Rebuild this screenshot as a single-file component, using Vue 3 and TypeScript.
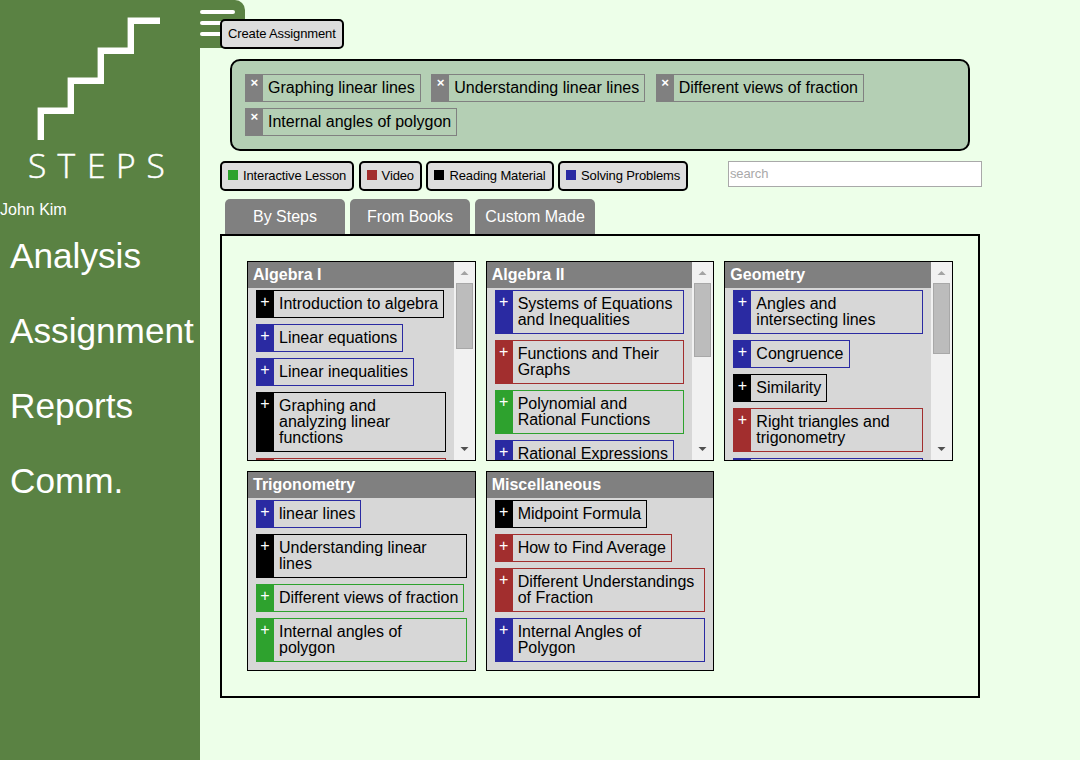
<script setup lang="ts">
type Kind = 'lesson' | 'video' | 'reading' | 'problem'

interface Topic {
  title: string
  kind: Kind
}

interface Subject {
  name: string
  thumb?: number
  next?: Kind
  topics: Topic[]
}

const nav: string[] = ['Analysis', 'Assignment', 'Reports', 'Comm.']

const selected: string[] = [
  'Graphing linear lines',
  'Understanding linear lines',
  'Different views of fraction',
  'Internal angles of polygon',
]

const filters: { label: string; kind: Kind }[] = [
  { label: 'Interactive Lesson', kind: 'lesson' },
  { label: 'Video', kind: 'video' },
  { label: 'Reading Material', kind: 'reading' },
  { label: 'Solving Problems', kind: 'problem' },
]

const tabs: string[] = ['By Steps', 'From Books', 'Custom Made']

const subjects: Subject[] = [
  {
    name: 'Algebra I',
    thumb: 66,
    next: 'video',
    topics: [
      { title: 'Introduction to algebra', kind: 'reading' },
      { title: 'Linear equations', kind: 'problem' },
      { title: 'Linear inequalities', kind: 'problem' },
      { title: 'Graphing and\nanalyzing linear\nfunctions', kind: 'reading' },
    ],
  },
  {
    name: 'Algebra II',
    thumb: 74,
    topics: [
      { title: 'Systems of Equations\nand Inequalities', kind: 'problem' },
      { title: 'Functions and Their\nGraphs', kind: 'video' },
      { title: 'Polynomial and\nRational Functions', kind: 'lesson' },
      { title: 'Rational Expressions', kind: 'problem' },
    ],
  },
  {
    name: 'Geometry',
    thumb: 71,
    next: 'problem',
    topics: [
      { title: 'Angles and\nintersecting lines', kind: 'problem' },
      { title: 'Congruence', kind: 'problem' },
      { title: 'Similarity', kind: 'reading' },
      { title: 'Right triangles and\ntrigonometry', kind: 'video' },
    ],
  },
  {
    name: 'Trigonometry',
    topics: [
      { title: 'linear lines', kind: 'problem' },
      { title: 'Understanding linear\nlines', kind: 'reading' },
      { title: 'Different views of fraction', kind: 'lesson' },
      { title: 'Internal angles of\npolygon', kind: 'lesson' },
    ],
  },
  {
    name: 'Miscellaneous',
    topics: [
      { title: 'Midpoint Formula', kind: 'reading' },
      { title: 'How to Find Average', kind: 'video' },
      { title: 'Different Understandings\nof Fraction', kind: 'video' },
      { title: 'Internal Angles of\nPolygon', kind: 'problem' },
    ],
  },
]
</script>

<template>
  <div class="page">
    <aside class="sidebar">
      <svg class="logo" width="200" height="200" viewBox="0 0 200 200">
        <path
          d="M40.8 140V110.8H70.8V80.8H100.8V50.8H130.8V20.8H160"
          fill="none"
          stroke="#fff"
          stroke-width="6.4"
        />
        <text class="logo-text" x="28 57.500 87 116 146.500" y="177.500">STEPS</text>
      </svg>
      <div class="user">John Kim</div>
      <nav>
        <a v-for="item in nav" :key="item" class="nav-item">{{ item }}</a>
      </nav>
      <div class="menu-toggle"><i></i><i></i><i></i></div>
    </aside>

    <main class="main">
      <button class="btn" type="button">Create Assignment</button>

      <section class="selected">
        <div v-for="title in selected" :key="title" class="chip picked">
          <span class="badge">×</span>
          <span class="label">{{ title }}</span>
        </div>
      </section>

      <div class="toolbar">
        <button v-for="f in filters" :key="f.label" class="btn" type="button">
          <span class="swatch" :class="f.kind"></span>{{ f.label }}
        </button>
        <input class="search" type="text" placeholder="search" />
      </div>

      <div class="tabs">
        <div v-for="tab in tabs" :key="tab" class="tab">{{ tab }}</div>
      </div>

      <section class="panel">
        <article v-for="s in subjects" :key="s.name" class="card">
          <div class="content">
            <h3>{{ s.name }}</h3>
            <div class="topics">
              <div
                v-for="t in s.topics"
                :key="t.title"
                class="chip"
                :class="[t.kind, { wide: t.title.includes('\n') }]"
              >
                <span class="badge">+</span>
                <span class="label">{{ t.title }}</span>
              </div>
              <div v-if="s.next" class="chip wide" :class="s.next">
                <span class="badge"></span>
                <span class="label"></span>
              </div>
            </div>
          </div>
          <div v-if="s.thumb" class="scrollbar">
            <svg width="17" height="21" viewBox="0 0 17 21">
              <path d="M4.500 13L8.500 9L12.500 13Z" fill="#a3a3a3" />
            </svg>
            <div class="thumb" :style="{ height: s.thumb + 'px' }"></div>
            <svg class="down" width="17" height="21" viewBox="0 0 17 21">
              <path d="M4.500 8L8.500 12L12.500 8Z" fill="#505050" />
            </svg>
          </div>
        </article>
      </section>
    </main>
  </div>
</template>

<style>
body {
  margin: 0;
  overflow: hidden;
}
</style>

<style scoped>
.page {
  display: flex;
  height: 760px;
  background: #edffe9;
  font-family: 'Liberation Sans', Arial, sans-serif;
  font-size: 16px;
  color: #000;
}
.page *,
.page {
  box-sizing: border-box;
}
.sidebar {
  position: relative;
  flex: none;
  width: 200px;
  background: #5a8243;
  color: #fff;
}
.logo {
  display: block;
}
.logo-text {
  font-family: 'Open Sans', 'Noto Sans', sans-serif;
  font-weight: 300;
  font-size: 33.5px;
  fill: #fff;
  stroke: #fff;
  stroke-width: 0.5px;
}
.user {
  height: 18px;
  line-height: 20px;
}
nav {
  display: flex;
  flex-direction: column;
}
.nav-item {
  height: 75px;
  padding-left: 10px;
  line-height: 76px;
  font-size: 35.2px;
}
.menu-toggle {
  position: absolute;
  left: 200px;
  top: 0;
  width: 45px;
  height: 48px;
  padding-top: 10px;
  display: flex;
  flex-direction: column;
  gap: 7px;
  background: #5a8243;
  border-top-right-radius: 10px;
}
.menu-toggle i {
  width: 35px;
  height: 4px;
  border-radius: 2px;
  background: #fff;
}
.main {
  position: relative;
  width: 762px;
  margin: 19px 0 0 20px;
}
.btn {
  display: flex;
  align-items: center;
  flex: none;
  height: 30px;
  padding: 0 6px 2px;
  border: 2px solid #000;
  border-radius: 5px;
  background: #ddd;
  font-family: inherit;
  font-size: 13px;
  letter-spacing: -0.13px;
  color: #000;
  white-space: nowrap;
}
.selected {
  display: flex;
  flex-wrap: wrap;
  align-content: flex-start;
  gap: 6px 10.450px;
  width: 740px;
  height: 92px;
  margin: 10px 0 10px 10px;
  padding: 13px;
  border: 2px solid #000;
  border-radius: 10px;
  background: #b4cfb4;
}
.chip {
  display: flex;
  flex: none;
  border: 1px solid var(--tone);
}
.chip.wide {
  width: 100%;
}
.badge {
  flex: none;
  width: 17px;
  padding: 3px 1px 0 0;
  background: var(--tone);
  color: #fff;
  line-height: 16px;
  text-align: center;
}
.label {
  padding: 5px;
  min-height: 26px;
  line-height: 16px;
  white-space: pre;
}
.picked {
  --tone: #808080;
}
.picked .badge {
  padding: 0;
  font-size: 13.333px;
  font-weight: bold;
}
.lesson {
  --tone: #2ea22e;
}
.video {
  --tone: #a22e2e;
}
.reading {
  --tone: #000;
}
.problem {
  --tone: #2a2aa2;
}
.toolbar {
  display: flex;
  gap: 4.450px;
}
.swatch {
  width: 10px;
  height: 10px;
  margin-right: 5px;
  background: var(--tone);
}
.search {
  width: 254px;
  height: 26px;
  margin-left: auto;
  padding: 0 1px 2px;
  border: 1px solid #a9a9a9;
  border-radius: 0;
  background: #fff;
  font-family: inherit;
  font-size: 13px;
  letter-spacing: -0.13px;
}
.search::placeholder {
  color: #a9a9a9;
}
.tabs {
  display: flex;
  gap: 5px;
  margin: 8px 0 0 5px;
}
.tab {
  width: 120px;
  height: 35px;
  border-radius: 5px 5px 0 0;
  background: #808080;
  color: #fff;
  line-height: 35px;
  text-align: center;
}
.panel {
  display: grid;
  grid-template-columns: repeat(3, 1fr);
  grid-auto-rows: 200px;
  gap: 10px;
  width: 760px;
  padding: 25px;
  border: 2px solid #000;
}
.card {
  display: flex;
  min-width: 0;
  border: 1px solid #000;
  background: #d7d7d7;
  overflow: hidden;
}
.content {
  flex: 1;
  min-width: 0;
}
h3 {
  height: 26px;
  margin: 0;
  padding-left: 5px;
  background: #808080;
  color: #fff;
  font-size: 16px;
  line-height: 25px;
}
.topics {
  display: flex;
  flex-direction: column;
  align-items: flex-start;
  gap: 6px;
  padding: 2px 8px;
}
.scrollbar {
  display: flex;
  flex-direction: column;
  flex: none;
  width: 21px;
  padding: 0 2px;
  background: #f1f1f1;
}
.scrollbar svg {
  display: block;
  flex: none;
}
.thumb {
  flex: none;
  border: 1px solid #a8a8a8;
  background: #bcbcbc;
}
.down {
  margin-top: auto;
}
</style>
